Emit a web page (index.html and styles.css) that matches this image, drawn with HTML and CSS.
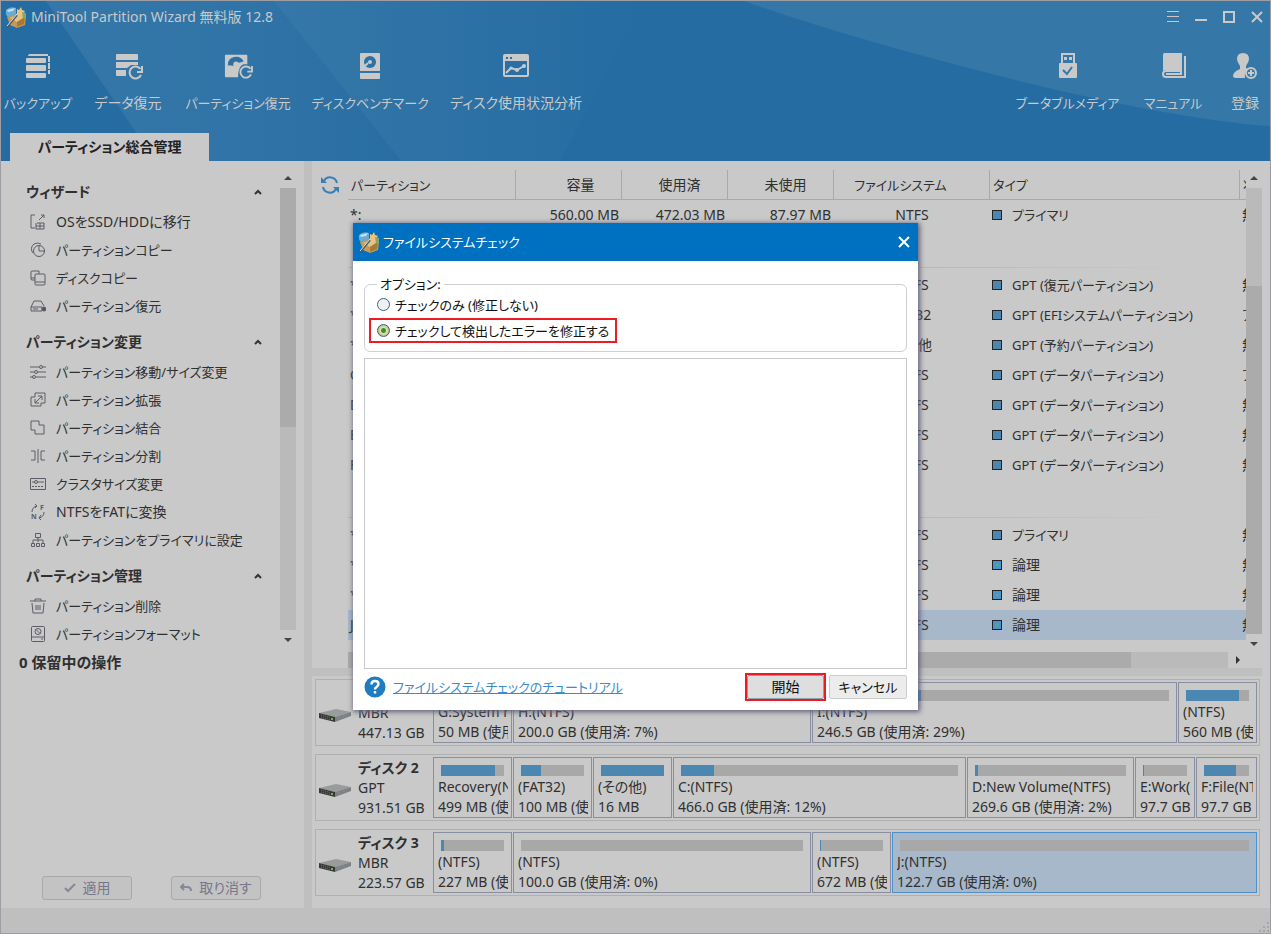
FILE: index.html
```html
<!DOCTYPE html>
<html lang="ja">
<head>
<meta charset="utf-8">
<title>MiniTool Partition Wizard</title>
<link rel="stylesheet" href="styles.css">
</head>
<body>
<svg class="defs" aria-hidden="true">
  <defs>
    <linearGradient id="fade-a" x1="0" x2="1"><stop offset="0" stop-color="#3577a8"/><stop offset=".6" stop-color="#3073a6"/><stop offset="1" stop-color="#286ea3"/></linearGradient>
    <linearGradient id="fade-b" x1="0" x2="1"><stop offset="0" stop-color="#3577a8"/><stop offset="1" stop-color="#246ca2"/></linearGradient>
    <symbol id="logo" viewBox="0 0 22 22">
      <path d="M2 11 13 7l8 3-1 9-8 3-7-3z" fill="#c69a56"/><path d="m5 12 8-3 6 2-7 5z" fill="#e4c483"/>
      <path d="m12 16 8-5-1 7-7 3z" fill="#a87936"/>
      <path d="M1 4q4-4 10-2v6l-8 3q-3-2-2-7z" fill="#68acd6"/><path d="m2 4 8-2-2 3-5 1z" fill="#c2e0ee"/>
      <path d="m12 3 2 1 2-3 1 3 3 1-2 3 1 3-4-1-3 1z" fill="#e9c47c"/><path d="m17 6 4 1v6l-3-1z" fill="#8ca36b"/>
      <path d="m2 21 10-12" stroke="#475a68" stroke-width="2"/><path d="m2 20 10-12" stroke="#dfe6ea" stroke-width="1"/>
    </symbol>
    <symbol id="drive" viewBox="0 0 32 14">
      <path d="M0 4 17 0l15 3-16 5z" fill="#999b9c"/><path d="m0 4 16 4v5L0 9z" fill="#373737"/><path d="m16 8 16-5v4l-16 6z" fill="#7c8089"/>
      <path d="m2 6 9 2.500M2 8l9 2.500" stroke="#777" stroke-dasharray="1 1"/><path d="M12 10h2" stroke="#74b344" stroke-width="2"/><path d="m19 9 2-.6m3-1 2-.6" stroke="#b58a4e"/>
    </symbol>
  </defs>
</svg>
<div class="window">
  <header class="header">
    <svg class="header-art" viewBox="0 0 1271 161" preserveAspectRatio="none" aria-hidden="true">
      <path d="M45 0h228l128 161H155z" fill="url(#fade-a)"/>
      <path d="M273 0h370L560 161H401z" fill="url(#fade-b)"/>
      <path d="M744 0Q850 38 1010 78T1271 126V0z" fill="#3577a6"/>
    </svg>
    <div class="titlebar">
      <svg class="logo"><use href="#logo"/></svg>
      <h1 class="title">MiniTool Partition Wizard 無料版 12.8</h1>
      <div class="window-controls">
        <button aria-label="メニュー"><svg viewBox="0 0 12 12"><path d="M0 .5h12M0 5.500h12M0 10.500h12"/></svg></button>
        <button aria-label="最小化"><svg viewBox="0 0 12 12"><path d="M0 9h12" stroke-width="2"/></svg></button>
        <button aria-label="最大化"><svg viewBox="0 0 12 12"><path d="M1 1h10v10H1z" stroke-width="2"/></svg></button>
        <button aria-label="閉じる"><svg viewBox="0 0 12 12"><path d="m1 1 10 10M11 1 1 11" stroke-width="2"/></svg></button>
      </div>
    </div>
    <nav class="toolbar">
      <div class="tools tools-left">
        <button class="tool dense"><svg viewBox="0 0 28 28" fill="#c9c9c9"><path d="M4 3q0-2 2-2h18v2zM24 3h2v6h-2zM24 10h2v6h-2zM24 17h2v4h-2z"/><rect x="2" y="5" width="20" height="5" rx="1"/><rect x="2" y="12" width="20" height="6" rx="1"/><rect x="2" y="20" width="20" height="5" rx="1"/></svg>バックアップ</button>
        <button class="tool"><svg viewBox="0 0 28 28" fill="#c9c9c9"><path d="M2 2q0-1 1-1h20q1 0 1 1v5H2zM2 9h22v3h-7l-4 3H2zM2 17h10v6H3q-1 0-1-1z"/><path d="M26.500 16a6 6 0 1 0 .5 6M28 13v6h-5" fill="none" stroke="#c9c9c9" stroke-width="2"/></svg>データ復元</button>
        <button class="tool dense"><svg viewBox="0 0 30 28"><path d="M1 2q0-1 1-1h22q1 0 1 1v9h-4q-6 2-6 14H2q-1 0-1-1z" fill="#c9c9c9"/><path d="M4 12a9 9 0 0 1 17-4l-7 2-1 3" fill="#2c70a4"/><circle cx="13" cy="11" r="3" fill="#c9c9c9"/><path d="M28.500 16a6 6 0 1 0 .5 6M30 13v6h-5" fill="none" stroke="#c9c9c9" stroke-width="2"/></svg>パーティション復元</button>
        <button class="tool dense"><svg viewBox="0 0 28 28"><path d="M4 1q0-1 1-1h18q1 0 1 1v17H4zM4 20h20v5q0 1-1 1H5q-1 0-1-1z" fill="#c9c9c9"/><circle cx="14" cy="9" r="6" fill="#2c70a4"/><circle cx="14" cy="9" r="2" fill="#c9c9c9"/><path d="m8 14 4-4" stroke="#c9c9c9" stroke-width="2"/></svg>ディスクベンチマーク</button>
        <button class="tool"><svg viewBox="0 0 28 28"><rect x="2" y="2" width="24" height="21" rx="1" fill="none" stroke="#c9c9c9" stroke-width="2"/><path d="M2 2h24v6H2z" fill="#c9c9c9"/><path d="M4 4h2v2H4zM8 4h2v2H8z" fill="#286ea3"/><path d="m4 20 5-5 6 2 7-4" fill="none" stroke="#c9c9c9" stroke-width="2"/><circle cx="9" cy="15" r="1.500" fill="#c9c9c9"/><circle cx="15" cy="17" r="2" fill="#c9c9c9"/><circle cx="22" cy="13" r="2" fill="#c9c9c9"/></svg>ディスク使用状況分析</button>
      </div>
      <div class="tools tools-right">
        <button class="tool dense"><svg viewBox="0 0 28 28"><path d="M8 11V1h12v10" fill="none" stroke="#c9c9c9" stroke-width="2"/><path d="M10 4h3v3h-3zM15 4h3v3h-3z" fill="#c9c9c9"/><rect x="5" y="10" width="18" height="15" rx="1" fill="#c9c9c9"/><path d="m9 17 4 4 5-7" fill="none" stroke="#3577a6" stroke-width="2"/></svg>ブータブルメディア</button>
        <button class="tool dense"><svg viewBox="0 0 28 28"><path d="M5 0h18v17H6q-2 0-2 2V3q0-3 1-3z" fill="#c9c9c9"/><path d="M26 3v21H7q-3 0-3-3t3-3h15v3H7" fill="none" stroke="#c9c9c9" stroke-width="2"/></svg>マニュアル</button>
        <button class="tool"><svg viewBox="0 0 28 28"><path d="M12 0q6 0 6 6 0 3-3 7v2l2 1q-4 3-3 9H6q-4 0-4-2 0-4 7-7v-3Q6 9 6 6q0-6 6-6z" fill="#c9c9c9"/><circle cx="20" cy="20" r="5" fill="none" stroke="#c9c9c9" stroke-width="2"/><path d="M20 17v6m-3-3h6" stroke="#c9c9c9" stroke-width="2"/></svg>登録</button>
      </div>
    </nav>
    <div class="tabs"><button class="tab">パーティション総合管理</button></div>
  </header>

  <div class="body">
    <aside class="sidebar">
      <div class="side-top">
        <div class="groups">
          <section class="group">
            <h2 class="group-title"><span>ウィザード</span><svg class="chev" viewBox="0 0 8 6"><path d="m1 5 3-3 3 3"/></svg></h2>
            <a class="item" href="#"><svg viewBox="0 0 16 16"><path d="M5 1H1v13h4M7 9h7v6H6V9m0 3h8m-4-3v6M9 6l5-5m-3 0h3v3"/></svg>OSをSSD/HDDに移行</a>
            <a class="item dense" href="#"><svg viewBox="0 0 16 16"><circle cx="9" cy="9" r="5.500"/><path d="M9 3v6h6M3 11A6 6 0 0 1 4 2q4-2 7 0"/></svg>パーティションコピー</a>
            <a class="item dense" href="#"><svg viewBox="0 0 16 16"><rect x="5" y="4" width="10" height="11" rx="1"/><path d="M5 12h10M5 10H2q-1 0-1-1V2q0-1 1-1h7v3M1 8h4"/></svg>ディスクコピー</a>
            <a class="item dense" href="#"><svg viewBox="0 0 16 16"><path d="M1 9 4 3h7l3 5M1 9h11v4H1zM3 11h5"/><circle cx="14" cy="11" r="2" fill="#555"/></svg>パーティション復元</a>
          </section>
          <section class="group">
            <h2 class="group-title"><span>パーティション変更</span><svg class="chev" viewBox="0 0 8 6"><path d="m1 5 3-3 3 3"/></svg></h2>
            <a class="item dense" href="#"><svg viewBox="0 0 16 16"><path d="M0 3h9m3 0h4M0 8h4m3 0h9M0 13h3m3 0h10"/><circle cx="11" cy="3" r="1.500"/><circle cx="6" cy="8" r="1.500"/><circle cx="4" cy="13" r="1.500"/></svg>パーティション移動/サイズ変更</a>
            <a class="item dense" href="#"><svg viewBox="0 0 16 16"><path d="M5 5V1h10v10h-4M5 5H1v9h10v-3M5 11l7-7m-4 0h4v4M5 7v4h4"/></svg>パーティション拡張</a>
            <a class="item dense" href="#"><svg viewBox="0 0 16 16"><path d="M1 1h8v4h5v9H5v-4H1z"/></svg>パーティション結合</a>
            <a class="item dense" href="#"><svg viewBox="0 0 16 16"><path d="M8 1v14M1 3h4v9H1m14-9h-4v9h4"/></svg>パーティション分割</a>
            <a class="item dense" href="#"><svg viewBox="0 0 16 16"><path d="M.5 2.500h15v11H.5zM2 6h3m2 0h7"/><circle cx="6" cy="6" r="1.500"/><path d="M2 10.500h12" stroke-dasharray="2 1"/></svg>クラスタサイズ変更</a>
            <a class="item" href="#"><svg viewBox="0 0 16 16"><path d="M2 8q0-5 5-6M5 0l2 2-2 2m9 4q0 5-5 6m2-3-2 3 2 2"/><text x="10" y="6">F</text><text x="1" y="15">N</text></svg>NTFSをFATに変換</a>
            <a class="item dense" href="#"><svg viewBox="0 0 16 16"><path d="M5.500 1.500h5v4h-5zM8 6v4M3 11V8h10v3M1.500 11.500h3v3h-3zM6.500 11.500h3v3h-3zM11.500 11.500h3v3h-3z"/></svg>パーティションをプライマリに設定</a>
          </section>
          <section class="group">
            <h2 class="group-title"><span>パーティション管理</span><svg class="chev" viewBox="0 0 8 6"><path d="m1 5 3-3 3 3"/></svg></h2>
            <a class="item dense" href="#"><svg viewBox="0 0 16 16"><path d="M0 3h16M5 3V1h6v2M2 5l1 10h10l1-10M6 7v5m2-5v5m2-5v5"/></svg>パーティション削除</a>
            <a class="item dense" href="#"><svg viewBox="0 0 16 16"><rect x="1.500" y=".5" width="13" height="15" rx="1"/><path d="M2 11h12m-3 2h2"/><circle cx="8" cy="5.500" r="3"/><path d="m6 3.500 4 4"/></svg>パーティションフォーマット</a>
          </section>
        </div>
        <div class="vscroll">
          <svg class="arrow" viewBox="0 0 16 18"><path d="m4 10 4-4 4 4z"/></svg>
          <div class="track"><div class="thumb side-thumb"></div></div>
          <svg class="arrow" viewBox="0 0 16 18"><path d="m4 8 4 4 4-4z"/></svg>
        </div>
      </div>
      <div class="pending">
        <h2 class="pending-title">0 保留中の操作</h2>
        <div class="pending-actions">
          <button disabled><svg viewBox="0 0 12 10"><path d="m1 5 3 3 7-7"/></svg>適用</button>
          <button disabled><svg viewBox="0 0 12 10"><path d="M4 1 1 4l3 3M1 4h6q4 0 4 4"/></svg>取り消す</button>
        </div>
      </div>
    </aside>

    <main class="main">
      <div class="list">
        <button class="refresh" aria-label="更新"><svg viewBox="0 0 18 18"><path d="M16 7A7 7 0 0 0 3 5M2 11a7 7 0 0 0 13 2" fill="none" stroke="#3580b4" stroke-width="2"/><path d="M0 1v6h6zM18 17v-6h-6z" fill="#3580b4"/></svg></button>
        <div class="table-wrap">
          <table class="parts">
            <colgroup><col class="c-name"><col class="c-num"><col class="c-num"><col class="c-num"><col class="c-fs"><col><col class="c-state"></colgroup>
            <thead><tr><th class="left dense">パーティション</th><th class="cap-head">容量</th><th class="num-head">使用済</th><th class="num-head">未使用</th><th class="fs-head dense">ファイルシステム</th><th class="left dense">タイプ</th><th class="left">状態</th></tr></thead>
            <tbody>
              <tr><td>*:</td><td class="num">560.00 MB</td><td class="num">472.03 MB</td><td class="num">87.97 MB</td><td class="fs">NTFS</td><td class="dense"><i class="box"></i>プライマリ</td><td>無し</td></tr>
              <tr class="disk-row"><td colspan="7"></td></tr>
              <tr><td>*:</td><td></td><td></td><td></td><td class="fs">NTFS</td><td class="dense"><i class="box"></i>GPT (復元パーティション)</td><td>無し</td></tr>
              <tr><td>*:</td><td></td><td></td><td></td><td class="fs">FAT32</td><td class="dense"><i class="box"></i>GPT (EFIシステムパーティション)</td><td>アク</td></tr>
              <tr><td>*:</td><td></td><td></td><td></td><td class="fs">その他</td><td class="dense"><i class="box"></i>GPT (予約パーティション)</td><td>無し</td></tr>
              <tr><td>C:</td><td></td><td></td><td></td><td class="fs">NTFS</td><td class="dense"><i class="box"></i>GPT (データパーティション)</td><td>アク</td></tr>
              <tr><td>D:</td><td></td><td></td><td></td><td class="fs">NTFS</td><td class="dense"><i class="box"></i>GPT (データパーティション)</td><td>無し</td></tr>
              <tr><td>E:</td><td></td><td></td><td></td><td class="fs">NTFS</td><td class="dense"><i class="box"></i>GPT (データパーティション)</td><td>無し</td></tr>
              <tr><td>F:</td><td></td><td></td><td></td><td class="fs">NTFS</td><td class="dense"><i class="box"></i>GPT (データパーティション)</td><td>無し</td></tr>
              <tr class="disk-row"><td colspan="7"></td></tr>
              <tr><td>*:</td><td></td><td></td><td></td><td class="fs">NTFS</td><td class="dense"><i class="box"></i>プライマリ</td><td>無し</td></tr>
              <tr><td>*:</td><td></td><td></td><td></td><td class="fs">NTFS</td><td><i class="box logical"></i>論理</td><td>無し</td></tr>
              <tr><td>*:</td><td></td><td></td><td></td><td class="fs">NTFS</td><td><i class="box logical"></i>論理</td><td>無し</td></tr>
              <tr class="selected"><td>J:</td><td></td><td></td><td></td><td class="fs">NTFS</td><td><i class="box logical"></i>論理</td><td>無し</td></tr>
            </tbody>
          </table>
        </div>
        <div class="vscroll">
          <svg class="arrow" viewBox="0 0 16 18"><path d="m4 10 4-4 4 4z"/></svg>
          <div class="track end"><div class="thumb list-thumb"></div></div>
          <svg class="arrow" viewBox="0 0 16 18"><path d="m4 8 4 4 4-4z"/></svg>
        </div>
      </div>
      <div class="hscroll"><div class="htrack"><div class="hthumb"></div></div><svg class="harrow" viewBox="0 0 18 16"><path d="m8 4 4 4-4 4z"/></svg></div>
      <div class="splitter"></div>
      <div class="maps">
        <section class="disk">
          <svg class="drive"><use href="#drive"/></svg>
          <div class="disk-info"><b>ディスク 1</b><span>MBR</span><span>447.13 GB</span></div>
          <div class="blocks">
            <div class="block"><div class="bar"><div style="width:60%"></div></div><span>G:System reserved</span><span>50 MB (使用済: 60%)</span></div>
            <div class="block" style="flex:298 1 298px"><div class="bar"><div style="width:7%"></div></div><span>H:(NTFS)</span><span>200.0 GB (使用済: 7%)</span></div>
            <div class="block" style="flex:365 1 365px"><div class="bar"><div style="width:29%"></div></div><span>I:(NTFS)</span><span>246.5 GB (使用済: 29%)</span></div>
            <div class="block"><div class="bar"><div style="width:84%"></div></div><span>(NTFS)</span><span>560 MB (使用済: 84%)</span></div>
          </div>
        </section>
        <section class="disk">
          <svg class="drive"><use href="#drive"/></svg>
          <div class="disk-info"><b>ディスク 2</b><span>GPT</span><span>931.51 GB</span></div>
          <div class="blocks">
            <div class="block"><div class="bar"><div style="width:86%"></div></div><span>Recovery(NTFS)</span><span>499 MB (使用済: 86%)</span></div>
            <div class="block"><div class="bar"><div style="width:32%"></div></div><span>(FAT32)</span><span>100 MB (使用済: 32%)</span></div>
            <div class="block"><div class="bar"><div style="width:100%"></div></div><span>(その他)</span><span>16 MB</span></div>
            <div class="block" style="flex:293 1 293px"><div class="bar"><div style="width:12%"></div></div><span>C:(NTFS)</span><span>466.0 GB (使用済: 12%)</span></div>
            <div class="block" style="flex:167 1 167px"><div class="bar"><div style="width:2%"></div></div><span>D:New Volume(NTFS)</span><span>269.6 GB (使用済: 2%)</span></div>
            <div class="block" style="flex:60 1 60px"><div class="bar"><div style="width:1%"></div></div><span>E:Work(NTFS)</span><span>97.7 GB (使用済: 1%)</span></div>
            <div class="block" style="flex:61 1 61px"><div class="bar"><div style="width:71%"></div></div><span>F:File(NTFS)</span><span>97.7 GB (使用済: 71%)</span></div>
          </div>
        </section>
        <section class="disk">
          <svg class="drive"><use href="#drive"/></svg>
          <div class="disk-info"><b>ディスク 3</b><span>MBR</span><span>223.57 GB</span></div>
          <div class="blocks">
            <div class="block"><div class="bar"><div style="width:5%"></div></div><span>(NTFS)</span><span>227 MB (使用済: 5%)</span></div>
            <div class="block" style="flex:298 1 298px"><div class="bar"></div><span>(NTFS)</span><span>100.0 GB (使用済: 0%)</span></div>
            <div class="block"><div class="bar"><div style="width:2%"></div></div><span>(NTFS)</span><span>672 MB (使用済: 2%)</span></div>
            <div class="block active" style="flex:365 1 365px"><div class="bar"></div><span>J:(NTFS)</span><span>122.7 GB (使用済: 0%)</span></div>
          </div>
        </section>
      </div>
    </main>
  </div>
  <footer class="statusbar"><svg viewBox="0 0 12 12"><path d="M9 1h2v2H9zM9 5h2v2H9zM9 9h2v2H9zM5 5h2v2H5zM5 9h2v2H5zM1 9h2v2H1z"/></svg></footer>

  <div class="dialog" role="dialog" aria-labelledby="dlg-title">
    <div class="dialog-head">
      <svg class="logo"><use href="#logo"/></svg>
      <h2 id="dlg-title" class="dense">ファイルシステムチェック</h2>
      <button aria-label="閉じる"><svg viewBox="0 0 12 12"><path d="m1 1 10 10M11 1 1 11"/></svg></button>
    </div>
    <div class="dialog-body">
      <fieldset class="options">
        <legend class="dense">オプション:</legend>
        <label class="option dense"><input type="radio" name="mode">チェックのみ (修正しない)</label>
        <label class="option marked dense"><input type="radio" name="mode" checked>チェックして検出したエラーを修正する</label>
      </fieldset>
      <div class="output"></div>
      <div class="dialog-foot">
        <svg class="help" viewBox="0 0 22 22"><circle cx="11" cy="11" r="10.500" fill="#1f7cc1"/><path d="M7.500 8.500q0-3.500 3.500-3.500t3.500 3q0 1.500-2 3-1.500 1-1.500 2.500M11 15v2.500" fill="none" stroke="#fff" stroke-width="2.400"/></svg>
        <a class="dense" href="#">ファイルシステムチェックのチュートリアル</a>
        <span class="mark"><button class="btn start">開始</button></span>
        <button class="btn dense">キャンセル</button>
      </div>
    </div>
  </div>
</div>
</body>
</html>
```
FILE: styles.css
```css
* { box-sizing: border-box; }
body {
  margin: 0;
  font: 14px/20px "Noto Sans", "Noto Sans CJK JP", sans-serif;
  font-feature-settings: "palt";
  color: #303030;
  background: #c9c9c9;
}
h1, h2 { margin: 0; font-size: 14px; }
button { font: inherit; color: inherit; font-feature-settings: inherit; background: none; border: 0; padding: 0; }
.dense { font-size: 13px; }
.defs { position: absolute; width: 0; height: 0; }

.window {
  position: relative;
  display: flex;
  flex-direction: column;
  min-height: 100vh;
  border: 1px solid #9d9da3;
  background: #c9c9c9;
}

/* Header */
.header { position: relative; display: flex; flex-direction: column; background: #246ca2; color: #c9c9c9; }
.header-art { position: absolute; inset: 0; width: 100%; height: 100%; }
.titlebar, .toolbar, .tabs { position: relative; }
.titlebar { display: flex; align-items: center; gap: 4px; height: 32px; padding: 0 7px 0 4px; }
.logo { width: 22px; height: 22px; }
.title { font-weight: 400; }
.window-controls { display: flex; gap: 16px; margin-left: auto; }
.window-controls button { width: 12px; height: 12px; }
.window-controls svg { display: block; width: 12px; height: 12px; fill: none; stroke: #c9c9c9; }
.toolbar { display: flex; justify-content: space-between; height: 100px; padding: 20px 10px 0 5px; }
.tools { display: grid; align-content: start; justify-content: start; }
.tools-left { grid-template-columns: 64px 66px 104px 110px 132px; column-gap: 25px; }
.tools-right { grid-template-columns: 97px 58px 30px; column-gap: 28px; }
.tool { display: flex; flex-direction: column; align-items: center; gap: 12px; white-space: nowrap; }
.tool svg { width: 28px; height: 28px; overflow: visible; }
.tabs { display: flex; padding-left: 9px; }
.tab { width: 199px; height: 28px; background: #c9c9c9; color: #222; font-weight: 700; }

/* Layout */
.body { flex: 1; display: flex; }
.sidebar { flex: 0 0 303px; display: flex; flex-direction: column; padding-top: 9px; }
.main { flex: 1; min-width: 0; display: flex; flex-direction: column; padding: 9px 8px 12px 0; border-left: 8px solid #bfbfbf; }
.statusbar { display: flex; align-items: flex-end; justify-content: flex-end; height: 25px; background: #bfbfbf; }
.statusbar svg { width: 12px; height: 12px; fill: #a6a6a6; }

/* Sidebar */
.side-top { flex: 1; display: flex; }
.groups { flex: 1; padding-top: 8px; }
.group { padding-bottom: 8px; }
.group:last-child { padding-bottom: 0; }
.group-title { display: flex; justify-content: space-between; align-items: center; height: 30px; padding: 0 18px 2px 25px; }
.chev { width: 8px; height: 6px; fill: none; stroke: #333; stroke-width: 2; }
.item { display: flex; align-items: center; gap: 10px; height: 28px; padding-left: 29px; color: inherit; text-decoration: none; white-space: nowrap; }
.item svg { width: 16px; height: 16px; fill: none; stroke: #5c5c66; }
.item text { font: 700 7px "Noto Sans", sans-serif; fill: #5c5c66; stroke: none; }
.vscroll { flex: 0 0 16px; display: flex; flex-direction: column; }
.side-top .vscroll { margin-right: 8px; }
.side-top .vscroll .arrow:last-child { margin-bottom: 2px; }
.arrow { width: 16px; height: 18px; fill: #444; }
.track { flex: 1; display: flex; flex-direction: column; background: #bababa; }
.track.end { justify-content: flex-end; }
.thumb { background: #ababab; }
.side-thumb { height: 54%; }
.list-thumb { height: 78%; }
.pending { min-height: 258px; display: flex; flex-direction: column; justify-content: space-between; padding: 2px 43px 8px 18px; }
.pending-title { font-size: 15px; }
.pending-actions { display: flex; justify-content: space-between; padding-left: 23px; }
.pending-actions button { display: flex; align-items: center; justify-content: center; gap: 7px; width: 90px; height: 24px; border: 1px solid #a9a9a9; border-radius: 3px; background: #c3c3c3; color: #77778c; }
.pending-actions svg { width: 12px; height: 10px; fill: none; stroke: #85889c; stroke-width: 2; }

/* Partition list */
.list { flex: 1; display: flex; }
.refresh { flex: 0 0 36px; align-self: flex-start; height: 30px; }
.refresh svg { display: block; width: 18px; height: 18px; margin: 0 auto; }
.table-wrap { flex: 1; min-width: 0; overflow: hidden; }
.parts { width: 100%; table-layout: fixed; border-collapse: separate; border-spacing: 0; }
.c-name { width: 168px; }
.c-num { width: 106px; }
.c-fs { width: 156px; }
.c-state { width: 6px; }
.parts th { height: 30px; padding: 0; border-right: 1px solid #a9a9a9; border-bottom: 1px solid #a9a9a9; font-weight: 400; overflow: hidden; white-space: nowrap; }
.parts th:last-child { border-right: 0; }
.parts .left { padding-left: 3px; text-align: left; }
.parts .cap-head { padding-left: 24px; }
.parts .num-head { padding-left: 10px; }
.parts .fs-head { padding-right: 22px; }
.parts td { height: 30px; padding: 0 0 0 2px; overflow: hidden; white-space: nowrap; }
.parts .num { padding-right: 3px; text-align: right; }
.parts .fs { padding: 0; text-align: center; }
.parts .disk-row td { height: 40px; background: linear-gradient(90deg, #b5b5b5 60%, #c9c9c9 94%) 0 37px / 100% 1px no-repeat; }
.parts .selected td { background: #a7b8ca; }
.box { display: inline-block; width: 10px; height: 10px; margin-right: 10px; border: 1px solid #222; background: #4b87b0; }
.box.logical { background: radial-gradient(#67a66b 10%, #4a94ce 35%); }

.hscroll { display: flex; height: 16px; padding-left: 36px; padding-right: 16px; }
.htrack { flex: 1; background: #bababa; }
.hthumb { width: 89%; height: 16px; background: #ababab; }
.harrow { width: 18px; height: 16px; fill: #333; }
.splitter { height: 8px; background: #bfbfbf; }

/* Disk map */
.maps { display: flex; flex-direction: column; gap: 8px; padding: 3px 2px 0 3px; }
.disk { display: grid; grid-template-columns: 39px 75px 1fr; border: 1px solid #b0b0b0; padding: 2px 2px 2px 3px; }
.drive { width: 32px; height: 14px; align-self: center; margin-top: 6px; }
.disk-info { display: flex; flex-direction: column; white-space: nowrap; padding-top: 1px; }
.blocks { display: flex; gap: 1px; min-width: 0; }
.block { flex: 0 0 79px; min-width: 0; display: flex; flex-direction: column; overflow: hidden; border: 1px solid #898fa0; padding: 7px 3px 0 4px; }
.block span { overflow: hidden; white-space: nowrap; }
.bar { height: 11px; margin: 0 4px 1px 3px; background: #a8a8a8; }
.bar div { height: 11px; background: #4b87b0; }
.block.active { border-color: #4d91c8; background: #a7b8ca; }

/* Dialog */
.dialog { position: absolute; left: 352px; top: 222px; width: 565px; background: #fff; color: #111; box-shadow: 1px 1px 5px 1px #62627c; }
.dialog-head { display: flex; align-items: center; gap: 3px; height: 38px; padding: 0 8px 0 5px; background: #0070c0; color: #fff; }
.dialog-head h2 { font-weight: 400; }
.dialog-head button { width: 12px; height: 12px; margin-left: auto; }
.dialog-head button svg { display: block; width: 12px; height: 12px; fill: none; stroke: #fff; stroke-width: 2; }
.dialog-body { display: flex; flex-direction: column; padding: 14px 11px 9px; }
.options { margin: 0 0 6px; padding: 0 4px 8px; border: 1px solid #cfcfcf; border-radius: 6px; }
.options legend { margin-left: 8px; padding: 0 3px; line-height: 18px; }
.option { display: flex; align-items: center; gap: 5px; width: fit-content; height: 25px; padding: 0 7px 2px 8px; }
.option input { appearance: none; width: 13px; height: 13px; margin: 0; border: 1px solid #3b6389; border-radius: 50%; background: #eef0f2; }
.option input:checked { background: radial-gradient(circle, #2c9c2e 0 2px, #e8dfb8 3px, #b9ae80 6px); }
.option.marked { padding: 0 6px; border: 2px solid #ed1c24; }
.output { height: 311px; border: 1px solid #c9c9c9; }
.dialog-foot { display: flex; align-items: center; padding-top: 4px; }
.help { width: 22px; height: 22px; margin-right: 7px; }
.dialog-foot a { color: #3a8dcc; }
.mark { margin-left: auto; margin-right: 3px; border: 2px solid #ed1c24; }
.btn { display: block; width: 78px; height: 24px; border: 1px solid #ccc; border-radius: 2px; background: #ececec; }
.btn.start { width: 77px; border-color: #8ba0ad; background: #dedede; }
```
